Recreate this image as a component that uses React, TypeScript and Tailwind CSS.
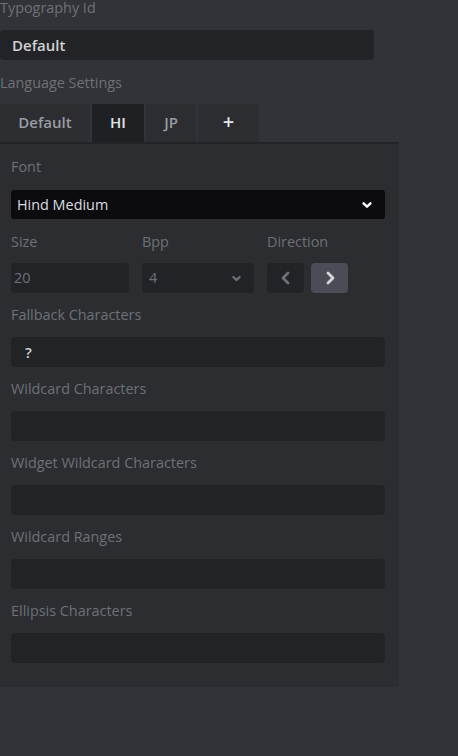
import { ReactNode } from 'react';

function Label({ children, className = '' }: { children: ReactNode; className?: string }) {
  return <div className={`text-[14.4px] leading-[20px] text-[#6e7176] ${className}`}>{children}</div>;
}

function Chevron({ dir, className = '' }: { dir: 'left' | 'right' | 'down'; className?: string }) {
  const d =
    dir === 'left' ? 'M9 3 L4 8 L9 13' : dir === 'right' ? 'M5 3 L10 8 L5 13' : 'M3 5 L7 9 L11 5';
  const box = dir === 'down' ? '0 0 14 14' : '0 0 14 16';
  return (
    <svg viewBox={box} className={className} fill="none" stroke="currentColor" strokeWidth={2.8} strokeLinecap="round" strokeLinejoin="round">
      <path d={d} />
    </svg>
  );
}

function Field({ label, value }: { label: string; value?: string }) {
  return (
    <div className="mt-3">
      <Label className="mb-3">{label}</Label>
      <div className="h-[30px] rounded-[4px] bg-[#222327] pl-[14px] flex items-center text-[15px] font-semibold text-[#d2d3d5]">
        {value}
      </div>
    </div>
  );
}

export default function App() {
  const tabs = [
    { name: 'Default', w: 'w-[90px]', active: false },
    { name: 'HI', w: 'w-[52px]', active: true },
    { name: 'JP', w: 'w-[50px]', active: false },
    { name: '+', w: 'w-[61px]', active: false },
  ];

  return (
    <div className="min-h-[756px] w-[458px] bg-[#313338] font-['Open_Sans',sans-serif] overflow-hidden">
      <div className="w-[374px]">
        <Label className="-mt-[2px] mb-3">Typography Id</Label>
        <div className="h-[30px] rounded-[4px] bg-[#222327] pl-[12px] flex items-center text-[15px] font-semibold text-[#d2d3d5]">
          Default
        </div>
        <Label className="mt-[13px] mb-[11px]">Language Settings</Label>
      </div>

      <div className="flex gap-[2px] h-[38px]">
        {tabs.map((t) => (
          <div
            key={t.name}
            className={`${t.w} flex items-center justify-center pb-[2px] text-[15px] font-semibold ${
              t.active ? 'bg-[#1f2023] text-[#e4e5e7]' : 'bg-[#2b2d31] text-[#9a9ca1]'
            } ${t.name === '+' ? 'text-[20px] text-[#e4e5e7] font-bold' : ''}`}
          >
            {t.name}
          </div>
        ))}
      </div>

      <div className="w-[399px] bg-[#2b2d31] border-t-2 border-[#222327] px-[11px] pt-[13px] pb-[24px]">
        <div className="w-[374px]">
          <Label className="mb-[13px]">Font</Label>
          <div className="h-[29px] rounded-[3px] bg-[#0c0c0e] pl-[6px] pr-[12px] flex items-center justify-between text-[14.4px] font-medium text-[#dcdde0]">
            <span>Hind Medium</span>
            <Chevron dir="down" className="w-[12px] h-[12px] text-white" />
          </div>

          <div className="flex mt-[13px]">
            <div className="w-[131px]">
              <Label className="mb-[11px]">Size</Label>
              <div className="w-[118px] h-[30px] rounded-[4px] bg-[#222327] pl-[3px] flex items-center text-[14.4px] text-[#6e7176]">
                20
              </div>
            </div>
            <div className="w-[125px]">
              <Label className="mb-[11px]">Bpp</Label>
              <div className="w-[112px] h-[30px] rounded-[4px] bg-[#222327] pl-[7px] pr-[12px] flex items-center justify-between text-[14.4px] text-[#6e7176]">
                <span>4</span>
                <Chevron dir="down" className="w-[11px] h-[11px] text-[#6e7176]" />
              </div>
            </div>
            <div>
              <Label className="mb-[11px]">Direction</Label>
              <div className="flex gap-[7px]">
                <div className="w-[37px] h-[30px] rounded-[4px] bg-[#222327] flex items-center justify-center text-[#6e7176]">
                  <Chevron dir="left" className="w-[14px] h-[18px]" />
                </div>
                <div className="w-[37px] h-[30px] rounded-[4px] bg-[#4a4d55] flex items-center justify-center text-[#d6d7da]">
                  <Chevron dir="right" className="w-[14px] h-[18px]" />
                </div>
              </div>
            </div>
          </div>

          <Field label="Fallback Characters" value="?" />
          <Field label="Wildcard Characters" />
          <Field label="Widget Wildcard Characters" />
          <Field label="Wildcard Ranges" />
          <Field label="Ellipsis Characters" />
        </div>
      </div>
    </div>
  );
}
